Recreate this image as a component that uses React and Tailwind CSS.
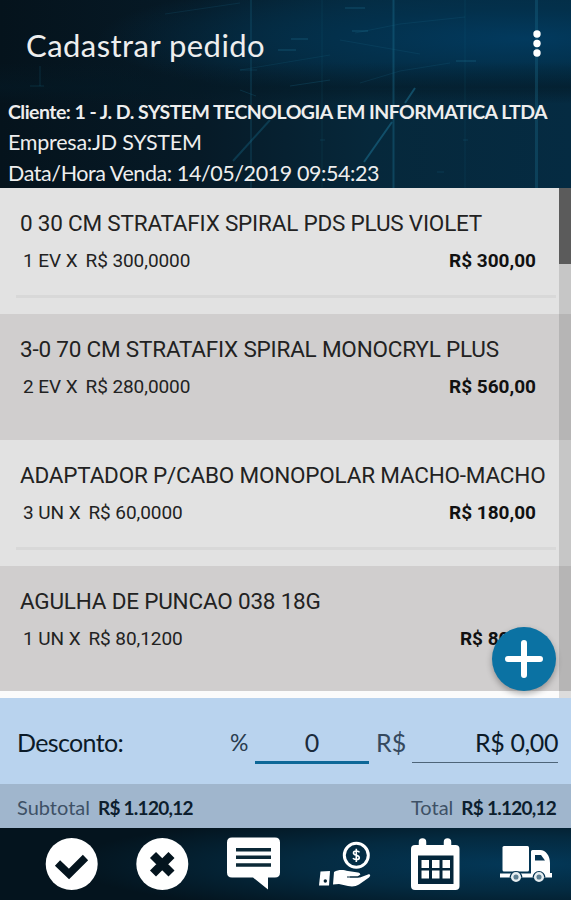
const items = [
    { name: '0 30 CM STRATAFIX SPIRAL PDS PLUS VIOLET', qty: '1 EV X', price: 'R$ 300,0000', total: 'R$ 300,00' },
    { name: '3-0 70 CM STRATAFIX SPIRAL MONOCRYL PLUS', qty: '2 EV X', price: 'R$ 280,0000', total: 'R$ 560,00' },
    { name: 'ADAPTADOR P/CABO MONOPOLAR MACHO-MACHO', qty: '3 UN X', price: 'R$ 60,0000', total: 'R$ 180,00' },
    { name: 'AGULHA DE PUNCAO 038 18G', qty: '1 UN X', price: 'R$ 80,1200', total: 'R$ 80,12' },
];

function HeaderLines() {
    return (
        <svg className="absolute inset-0 h-full w-full" viewBox="0 0 571 188" fill="none">
            <g stroke="#1b6f8f">
                <path d="M251 0V188" strokeWidth="2" opacity=".22" />
                <path d="M393.500 0V188" strokeWidth="2" opacity=".4" />
                <path d="M536.500 0V188" strokeWidth="3" opacity=".32" />
                <path d="M322 0V188M465 0V188" opacity=".16" />
                <path d="M415 88L405 103M392 122L364 162" strokeWidth="2" opacity=".55" />
                <path d="M270 120L233 161" strokeWidth="2" opacity=".35" />
                <path d="M345 8h20M456 61h20M278 50h18M352 31h16M291 39h17" opacity=".5" />
                <path d="M40 66v20M30 86h14M240 70h17M240 90l16 6" opacity=".25" />
                <path d="M355 33L400 24L465 17M340 40L420 54M360 83L400 71L450 63M240 70L330 55M165 14L240 3" opacity=".18" />
                <path d="M290 86L330 80M437 172h7M320 140h5M463 140h5" opacity=".25" />
            </g>
        </svg>
    );
}

function Header() {
    return (
        <header className="relative h-[188px] overflow-hidden bg-[linear-gradient(90deg,#05131c_0%,#061a27_35%,#06283b_65%,#052b42_100%)] text-[#eeeeee]">
            <div className="absolute inset-x-0 top-0 h-[90px] bg-[radial-gradient(ellipse_75%_75%_at_92%_43%,#023a5e_0%,#03304b_45%,transparent_100%)]" />
            <div className="absolute inset-x-0 top-[62px] h-[42px] bg-[linear-gradient(180deg,transparent,#04192599_60%,transparent)]" />
            <HeaderLines />
            <div className="relative flex h-[88px] items-center justify-between pr-[30px] pl-[26px]">
                <h1 className="pt-px text-[31px] leading-9 tracking-[0.45px] whitespace-nowrap">Cadastrar pedido</h1>
                <svg className="h-7 w-2" viewBox="0 0 8 28" fill="#fff">
                    <circle cx="4" cy="4" r="3.700" />
                    <circle cx="4" cy="13.500" r="3.700" />
                    <circle cx="4" cy="23" r="3.700" />
                </svg>
            </div>
            <div className="relative flex flex-col pt-[8px] pl-[8px] text-[21.500px] leading-[31px] whitespace-nowrap">
                <p className="text-[19.500px] font-bold tracking-[-0.54px]">Cliente: 1 - J. D. SYSTEM TECNOLOGIA EM INFORMATICA LTDA</p>
                <p className="tracking-[-0.25px]">Empresa:JD SYSTEM</p>
                <p className="tracking-[-0.42px]">Data/Hora Venda: 14/05/2019 09:54:23</p>
            </div>
        </header>
    );
}

function OrderItem({ item, odd }) {
    return (
        <li className={odd ? 'h-[125.850px] bg-[#d0cece] px-[20px] pt-[19px]' : 'h-[125.850px] bg-[#e2e2e2] px-[20px] pt-[19px]'}>
            <p className="text-[22.500px] leading-8 tracking-[-0.2px] whitespace-nowrap text-[#222222]">{item.name}</p>
            <div className="mt-[8px] flex justify-between pr-[15px] pl-[3px] text-[19px] leading-7 text-[#222222]">
                <p className="flex gap-[8px] tracking-[-0.07px]">
                    <span>{item.qty}</span>
                    <span>{item.price}</span>
                </p>
                <p className="font-bold text-[#111111]">{item.total}</p>
            </div>
            {!odd && <div className="mt-[20px] -mr-[5px] -ml-[4px] h-[3px] bg-[#d8d8d8]" />}
        </li>
    );
}

function ItemList() {
    return (
        <main className="relative h-[510px] overflow-hidden bg-[#fbfbfb] font-[Roboto,sans-serif]">
            <ul className="w-[571px]">
                {items.map((item, i) => (
                    <OrderItem key={item.name} item={item} odd={i % 2 === 1} />
                ))}
            </ul>
            <div className="absolute top-0 right-0 h-full w-[12px] bg-black/12">
                <div className="h-[76px] bg-[#5b5b5b]" />
            </div>
            <button className="absolute right-[15px] bottom-[7px] flex size-[64px] items-center justify-center rounded-full bg-[#0b72a3] shadow-[0_3px_6px_rgba(0,0,0,0.3)]">
                <svg className="size-10" viewBox="0 0 40 40" stroke="#fff" strokeWidth="6" strokeLinecap="round">
                    <path d="M20 4V36M4 20H36" />
                </svg>
            </button>
        </main>
    );
}

function Discount() {
    return (
        <section className="flex h-[86px] items-start bg-[#b9d3ee] pt-[26px] pl-[17px] text-[25px] leading-9 whitespace-nowrap text-[#0b1a28]">
            <span className="w-[213px] tracking-[-0.65px]">Desconto:</span>
            <span className="w-[25px] text-[23px] text-[#2a3c4f]">%</span>
            <span className="h-[40px] w-[114px] border-b-[3px] border-[#0d6797] text-center text-[#1b2b3b]">0</span>
            <span className="ml-[7px] w-[36px] text-[#35495e]">R$</span>
            <span className="h-[39px] w-[146px] border-b border-[#4d6478] text-right tracking-[-0.4px]">R$ 0,00</span>
        </section>
    );
}

function Totals() {
    return (
        <section className="flex h-[44px] items-center justify-between bg-[#a0b6cd] pt-[2px] pr-[15px] pl-[17px] text-[20px] whitespace-nowrap text-[#3e5166]">
            <p className="flex items-baseline gap-[8px]">
                <span>Subtotal</span>
                <span className="text-[19px] font-bold tracking-[-0.750px] text-[#0d1e2e]">R$ 1.120,12</span>
            </p>
            <p className="flex items-baseline gap-[8px]">
                <span>Total</span>
                <span className="text-[19px] font-bold tracking-[-0.750px] text-[#0d1e2e]">R$ 1.120,12</span>
            </p>
        </section>
    );
}

const iconClass = 'h-[60px] w-[61px]';

function Footer() {
    return (
        <footer className="flex h-[72px] items-center overflow-hidden bg-[radial-gradient(ellipse_80%_75%_at_92%_50%,#033858_0%,#042a40_50%,#04141e_100%)] pl-[41px]">
            <div className="flex shrink-0 gap-[30px]">
                <svg className={iconClass} viewBox="0 0 61 60">
                    <circle cx="30.700" cy="30" r="26" fill="#fff" />
                    <path d="M16.500 29L28 40L44.500 23.500" fill="none" stroke="#04141e" strokeWidth="7.500" />
                </svg>
                <svg className={iconClass} viewBox="0 0 61 60">
                    <circle cx="30.300" cy="30" r="26" fill="#fff" />
                    <path d="M21 21L39.500 39.500M39.500 21L21 39.500" fill="none" stroke="#04141e" strokeWidth="8.500" />
                </svg>
                <svg className={iconClass} viewBox="0 0 61 60">
                    <path d="M9 3.500H52Q57 3.500 57 8.500V38.500Q57 43.500 52 43.500H45V55.500L30 43.500H9Q4 43.500 4 38.500V8.500Q4 3.500 9 3.500Z" fill="#fff" />
                    <path d="M13 15.700H48M13 23.300H48M13 31H48" stroke="#0b2836" strokeWidth="3.500" />
                </svg>
                <svg className={iconClass} viewBox="0 0 61 60">
                    <circle cx="42.300" cy="21.300" r="12" fill="none" stroke="#fff" strokeWidth="3" />
                    <path d="M45.500 18.300C44.500 16.700 39.500 16.300 39.500 19C39.500 21.800 45.300 20.700 45.300 23.700C45.300 26.300 40 26 39 24.200M42.300 14.700V27.900" fill="none" stroke="#fff" strokeWidth="1.600" />
                    <path d="M6.500 37.500L16 37L15 51.500H5Z" fill="#fff" />
                    <circle cx="11.300" cy="47" r="1.700" fill="#04202f" />
                    <path d="M20 38C25 35 30 36 34 37L44 38.500C47 39 47 42.500 44 42.500H36V43.500H46L54 40.500C56.500 39.800 57 42 55 43.500L45 50.500C42 52.500 38 53 34 52L25 50L19 50.500Z" fill="#fff" />
                    <path d="M33 43H44L46 41.500" fill="none" stroke="#04263a" strokeWidth="1.200" />
                </svg>
                <svg className={iconClass} viewBox="0 0 61 60">
                    <rect x="6" y="11" width="48.500" height="45" rx="4" fill="#fff" />
                    <path d="M17.500 15V8M42.500 15V8" stroke="#fff" strokeWidth="7.500" strokeLinecap="round" />
                    <rect x="13" y="21.500" width="35.500" height="28.500" fill="#04263b" />
                    <path d="M16.500 26h7.500v8h-7.500zM27 26h7.500v8H27zM37.500 26H45v8h-7.500zM16.500 36.500h7.500v8h-7.500zM27 36.500h7.500v8H27zM37.500 36.500H45v8h-7.500z" fill="#fff" />
                </svg>
                <svg className={iconClass} viewBox="0 0 61 60">
                    <rect x="6.500" y="12" width="26.500" height="25.500" rx="1.500" fill="#fff" />
                    <path d="M35 17.500Q35 16 36.500 16H44C50 16 54 22 54 29V39H56V43.500H4V39.500H35Z" fill="#fff" />
                    <path d="M39 21H45L49 26.500H39Z" fill="#063452" />
                    <path d="M13.500 43.500a6.500 6.500 0 0 1 13 0zM36.500 43.500a6.500 6.500 0 0 1 13 0z" fill="#063452" />
                    <g fill="#5d7f92" stroke="#e6edf0" strokeWidth="2.500">
                        <circle cx="20" cy="43" r="3.800" />
                        <circle cx="43" cy="43" r="3.800" />
                    </g>
                </svg>
            </div>
        </footer>
    );
}

export default function App() {
    return (
        <div className="h-[900px] w-[571px] overflow-hidden font-[Lato,sans-serif]">
            <Header />
            <ItemList />
            <Discount />
            <Totals />
            <Footer />
        </div>
    );
}
